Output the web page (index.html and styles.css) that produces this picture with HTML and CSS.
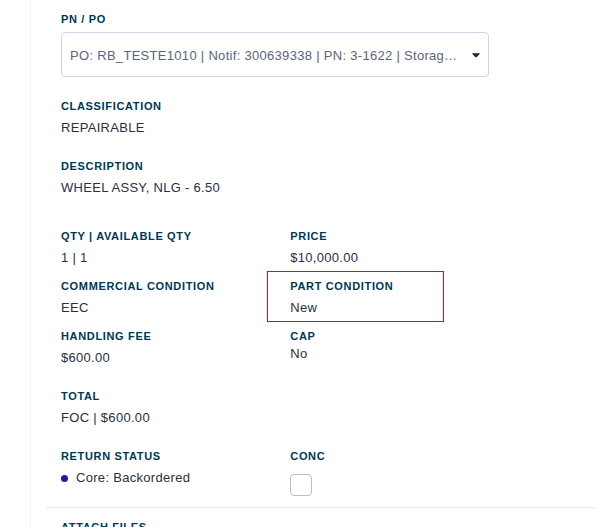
FILE: index.html
```html
<!DOCTYPE html>
<html lang="en">
<head>
<meta charset="utf-8">
<title>Part details</title>
<link rel="stylesheet" href="styles.css">
</head>
<body>
<main class="panel">
  <form class="details">
    <div class="picker">
      <label class="label" for="pn">PN / PO</label>
      <div class="select-box">
        <select id="pn"><option>PO: RB_TESTE1010 | Notif: 300639338 | PN: 3-1622 | Storage Location: 0001</option></select>
        <svg class="caret" viewBox="0 0 8 5" aria-hidden="true"><path d="M0.6 0.2H7.4Q8.3 0.4 7.6 1.1L4.8 4Q4 4.8 3.2 4L0.4 1.1Q-0.3 0.4 0.6 0.2Z"/></svg>
      </div>
    </div>
    <dl class="stack">
      <div class="field"><dt class="label">CLASSIFICATION</dt><dd>REPAIRABLE</dd></div>
      <div class="field"><dt class="label">DESCRIPTION</dt><dd>WHEEL ASSY, NLG - 6.50</dd></div>
    </dl>
    <dl class="grid">
      <div class="field"><dt class="label">QTY | AVAILABLE QTY</dt><dd>1 | 1</dd></div>
      <div class="field"><dt class="label">PRICE</dt><dd>$10,000.00</dd></div>
      <div class="field"><dt class="label">COMMERCIAL CONDITION</dt><dd>EEC</dd></div>
      <div class="field marked"><dt class="label">PART CONDITION</dt><dd>New</dd></div>
      <div class="field"><dt class="label">HANDLING FEE</dt><dd>$600.00</dd></div>
      <div class="field tight"><dt class="label">CAP</dt><dd>No</dd></div>
    </dl>
    <dl class="total">
      <div class="field"><dt class="label">TOTAL</dt><dd>FOC | $600.00</dd></div>
    </dl>
    <div class="grid status">
      <div class="field"><div class="label">RETURN STATUS</div><div class="state">Core: Backordered</div></div>
      <div class="field"><label class="label" for="conc">CONC</label><input class="check" id="conc" type="checkbox"></div>
    </div>
  </form>
  <section class="files"><h2 class="label">ATTACH FILES</h2></section>
</main>
</body>
</html>
```
FILE: styles.css
```css
* { box-sizing: border-box; }
body {
  margin: 0;
  height: 100vh;
  overflow: hidden;
  background: #fff;
  color: #2a2f3d;
  font: 13px/20px "Liberation Sans", Arial, sans-serif;
  letter-spacing: 0.3px;
}
dl, dd, h2 { margin: 0; }
.panel {
  margin-left: 30px;
  padding-left: 15px;
  min-height: 100vh;
  border-left: 1px solid #f1f3f6;
}
.details { padding: 12px 0 11px 15px; }
.label {
  display: block;
  color: #003852;
  font-size: 11px;
  line-height: 14px;
  font-weight: 700;
  letter-spacing: 0.06em;
}
.picker { width: 80%; }
.select-box { position: relative; margin-top: 6px; }
select {
  display: block;
  width: 100%;
  height: 45px;
  padding: 2px 28px 0 8px;
  border: 1px solid #cbd5e5;
  border-radius: 4px;
  appearance: none;
  background: #fff;
  color: #5b6579;
  font: inherit;
  letter-spacing: inherit;
  text-overflow: ellipsis;
}
.caret {
  position: absolute;
  right: 9px;
  top: 21px;
  width: 8px;
  height: 5px;
  fill: #1d2433;
  pointer-events: none;
}
.field { height: 50px; }
dd, .state { margin-top: 5px; }
.stack { margin-top: 22px; display: grid; gap: 10px; }
.grid {
  display: grid;
  grid-template-columns: 3fr 4fr;
}
.stack + .grid { margin-top: 20px; }
.total, .status { margin-top: 10px; }
.marked {
  width: 177px;
  margin: -8px 0 7px -23px;
  padding: 7px 22px;
  height: 51px;
  border: 1px solid #f00;
}
.tight dd { margin-top: 1px; }
.state { display: flex; align-items: center; gap: 8px; }
.state::before {
  content: "";
  width: 7px;
  height: 7px;
  border-radius: 50%;
  background: #2b15a5;
}
.check {
  appearance: none;
  display: block;
  width: 22px;
  height: 22px;
  margin: 11px 0 0;
  border: 1px solid #b0c0d6;
  border-radius: 4px;
  background: #fff;
}
.status .field { height: auto; }
.files { padding: 12px 15px; border-top: 1px solid #e8e9eb; }
```
